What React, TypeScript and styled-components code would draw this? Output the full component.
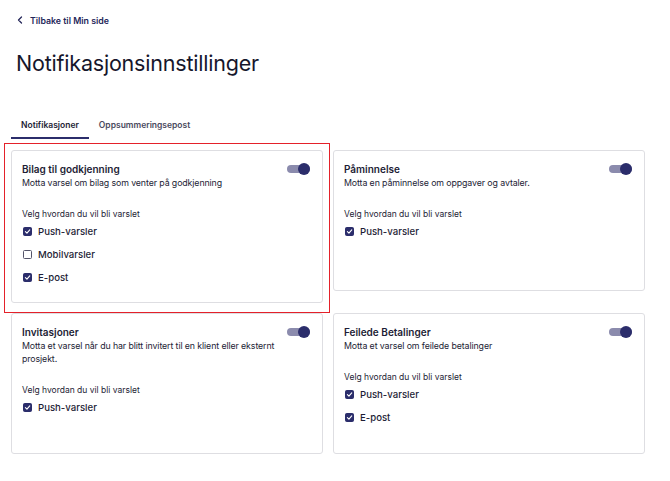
import React, { useState } from "react";
import styled, { createGlobalStyle } from "styled-components";

const GlobalStyle = createGlobalStyle`
  html, body {
    margin: 0;
    padding: 0;
    background: #ffffff;
  }
  body {
    font-family: Inter, Lato, "Noto Sans", sans-serif;
    color: #1d1d35;
  }
`;

const Page = styled.div`
  width: 634px;
  padding: 12px 25px 20px 11px;
  display: flex;
  flex-direction: column;
`;

const BackLink = styled.a`
  display: flex;
  align-items: center;
  gap: 7px;
  margin-left: 6px;
  font-size: 8.8px;
  font-weight: 600;
  color: #25275a;
  text-decoration: none;
  height: 16px;
`;

const Title = styled.h1`
  margin: 21px 0 0 5px;
  font-size: 21.5px;
  font-weight: 400;
  letter-spacing: -0.2px;
  color: #16162b;
  line-height: 28px;
`;

const Tabs = styled.div`
  display: flex;
  margin-top: 43px;
`;

const Tab = styled.button<{ $active?: boolean }>`
  border: none;
  background: none;
  padding: 0 10px 7px;
  font-family: inherit;
  font-size: 8.5px;
  font-weight: 600;
  color: ${(p) => (p.$active ? "#1d1d35" : "#4a4a5e")};
  border-bottom: 2px solid ${(p) => (p.$active ? "#2b2d6b" : "transparent")};
  cursor: pointer;
`;

const Grid = styled.div`
  margin-top: 11px;
  display: grid;
  grid-template-columns: 1fr 1fr;
  gap: 10px;
  align-items: start;
`;

const Card = styled.section<{ $highlight?: boolean }>`
  position: relative;
  box-sizing: border-box;
  min-height: 141px;
  border: 1px solid #dedee2;
  border-radius: 3px;
  padding: 11px 10px 13px;
  background: #fff;

  ${(p) =>
    p.$highlight &&
    `
    &::after {
      content: "";
      position: absolute;
      top: -8px;
      left: -8px;
      right: -8px;
      bottom: -11px;
      border: 1.5px solid #e4212a;
      pointer-events: none;
    }
  `}
`;

const CardHead = styled.div`
  display: flex;
  justify-content: space-between;
  align-items: flex-start;
  gap: 6px;
`;

const HeadText = styled.div`
  flex: 1;
  display: flex;
  flex-direction: column;
`;

const CardTitle = styled.h2`
  margin: 0;
  font-size: 10px;
  font-weight: 600;
  line-height: 14px;
  color: #1d1d35;
`;

const Description = styled.p`
  margin: 0;
  font-size: 8.8px;
  letter-spacing: -0.1px;
  line-height: 13px;
  color: #1d1d35;
`;

const Toggle = styled.span<{ $on: boolean }>`
  position: relative;
  flex: none;
  width: 23px;
  height: 8px;
  margin: 3px 2px 0 0;
  border-radius: 4px;
  background: ${(p) => (p.$on ? "#8b8bad" : "#c9c9d2")};
  cursor: pointer;

  &::after {
    content: "";
    position: absolute;
    top: -2px;
    left: ${(p) => (p.$on ? "11px" : "-2px")};
    width: 12px;
    height: 12px;
    border-radius: 50%;
    background: #2b2d6b;
  }
`;

const Methods = styled.div`
  margin-top: 20px;
  display: flex;
  flex-direction: column;
`;

const MethodsLabel = styled.div`
  font-size: 8.5px;
  line-height: 11px;
  color: #1d1d35;
`;

const CheckRow = styled.label`
  display: flex;
  align-items: center;
  gap: 6px;
  height: 23px;
  font-size: 9.6px;
  font-weight: 500;
  color: #1d1d35;
  cursor: pointer;
`;

const Box = styled.span<{ $checked: boolean }>`
  width: 9px;
  height: 9px;
  border-radius: 1.5px;
  box-sizing: border-box;
  margin-left: 1px;
  display: flex;
  align-items: center;
  justify-content: center;
  border: 1px solid ${(p) => (p.$checked ? "#2b2d6b" : "#55556a")};
  background: ${(p) => (p.$checked ? "#2b2d6b" : "#fff")};
`;

type Method = { label: string; checked: boolean };
type Setting = {
  title: string;
  description: string;
  methods: Method[];
  highlight?: boolean;
};

const settings: Setting[] = [
  {
    title: "Bilag til godkjenning",
    description: "Motta varsel om bilag som venter på godkjenning",
    highlight: true,
    methods: [
      { label: "Push-varsler", checked: true },
      { label: "Mobilvarsler", checked: false },
      { label: "E-post", checked: true },
    ],
  },
  {
    title: "Påminnelse",
    description: "Motta en påminnelse om oppgaver og avtaler.",
    methods: [{ label: "Push-varsler", checked: true }],
  },
  {
    title: "Invitasjoner",
    description:
      "Motta et varsel når du har blitt invitert til en klient eller eksternt prosjekt.",
    methods: [{ label: "Push-varsler", checked: true }],
  },
  {
    title: "Feilede Betalinger",
    description: "Motta et varsel om feilede betalinger",
    methods: [
      { label: "Push-varsler", checked: true },
      { label: "E-post", checked: true },
    ],
  },
];

const Check = () => (
  <svg width="7" height="7" viewBox="0 0 10 10">
    <path
      d="M2 5.2 L4.2 7.3 L8.2 2.8"
      fill="none"
      stroke="#fff"
      strokeWidth="1.6"
      strokeLinecap="round"
      strokeLinejoin="round"
    />
  </svg>
);

const SettingCard = ({ setting }: { setting: Setting }) => {
  const [on, setOn] = useState(true);
  const [methods, setMethods] = useState(setting.methods);

  const flip = (i: number) =>
    setMethods((m) =>
      m.map((x, j) => (j === i ? { ...x, checked: !x.checked } : x))
    );

  return (
    <Card $highlight={setting.highlight}>
      <CardHead>
        <HeadText>
          <CardTitle>{setting.title}</CardTitle>
          <Description>{setting.description}</Description>
        </HeadText>
        <Toggle $on={on} onClick={() => setOn(!on)} />
      </CardHead>
      <Methods>
        <MethodsLabel>Velg hvordan du vil bli varslet</MethodsLabel>
        {methods.map((m, i) => (
          <CheckRow key={m.label} onClick={() => flip(i)}>
            <Box $checked={m.checked}>{m.checked && <Check />}</Box>
            {m.label}
          </CheckRow>
        ))}
      </Methods>
    </Card>
  );
};

export default function App() {
  const [tab, setTab] = useState(0);
  return (
    <>
      <GlobalStyle />
      <Page>
        <BackLink href="#">
          <svg width="6" height="8" viewBox="0 0 6 8">
            <path
              d="M4.5 1 L1.5 4 L4.5 7"
              fill="none"
              stroke="#25275a"
              strokeWidth="1.3"
              strokeLinecap="round"
              strokeLinejoin="round"
            />
          </svg>
          Tilbake til Min side
        </BackLink>
        <Title>Notifikasjonsinnstillinger</Title>
        <Tabs>
          <Tab $active={tab === 0} onClick={() => setTab(0)}>
            Notifikasjoner
          </Tab>
          <Tab $active={tab === 1} onClick={() => setTab(1)}>
            Oppsummeringsepost
          </Tab>
        </Tabs>
        <Grid>
          {settings.map((s) => (
            <SettingCard key={s.title} setting={s} />
          ))}
        </Grid>
      </Page>
    </>
  );
}
